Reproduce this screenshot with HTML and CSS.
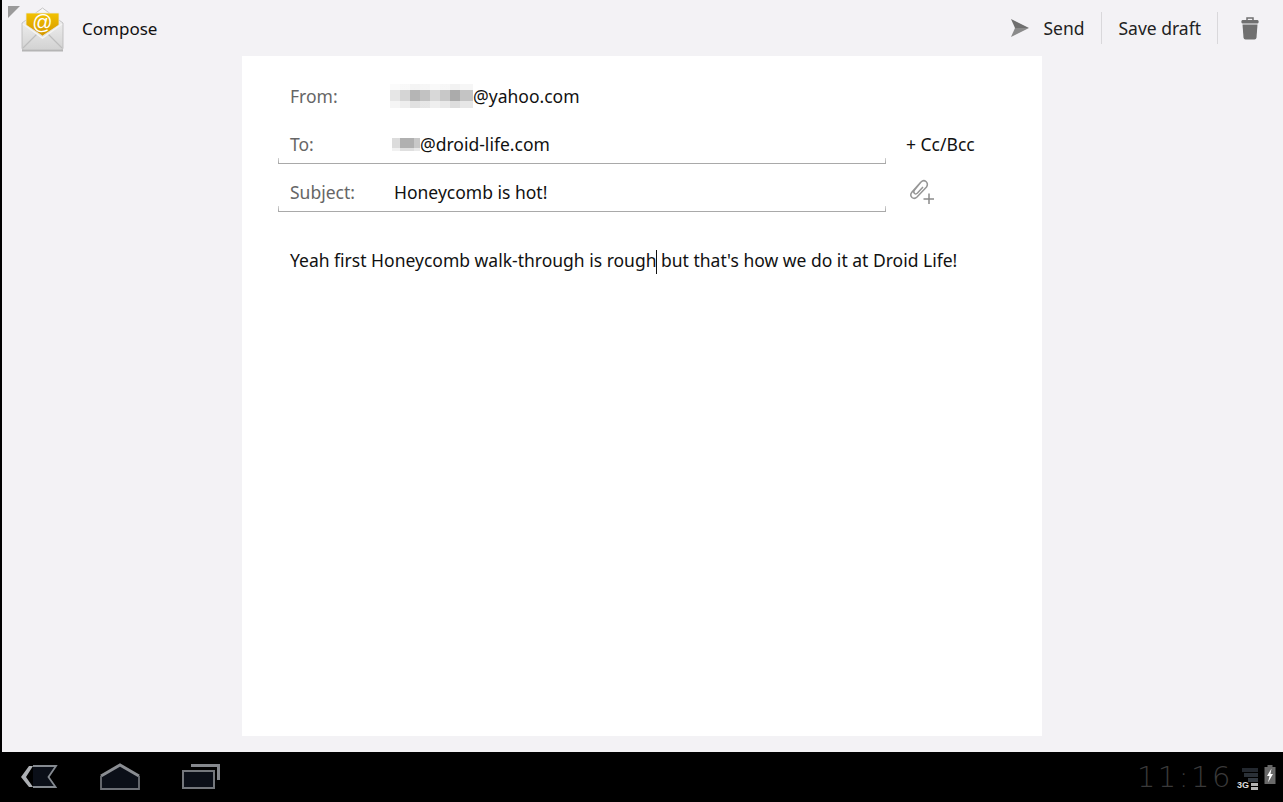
FILE: index.html
```html
<!DOCTYPE html>
<html lang="en">
<head>
    <meta charset="UTF-8">
    <meta name="viewport" content="width=device-width, initial-scale=1.0">
    <title>Compose</title>
    <link rel="stylesheet" href="styles.css">
</head>
<body>
    <div class="app">
        <header class="action-bar">
            <div class="title-group">
                <span class="corner"></span>
                <svg class="mail-icon" width="46" height="46" viewBox="0 0 46 46">
                    <defs>
                        <linearGradient id="flap" x1="0" y1="0" x2="0" y2="1">
                            <stop offset="0" stop-color="#f2c200"/>
                            <stop offset="1" stop-color="#d49600"/>
                        </linearGradient>
                        <linearGradient id="paper" x1="0" y1="0" x2="0" y2="1">
                            <stop offset="0" stop-color="#fafafa"/>
                            <stop offset="1" stop-color="#d2d2d2"/>
                        </linearGradient>
                    </defs>
                    <rect x="3" y="43.500" width="41" height="2" fill="#b4b4b4"/>
                    <path d="M3 17 L23.500 2 L44 17 V42 Q44 44 42 44 H5 Q3 44 3 42 Z" fill="url(#paper)" stroke="#b8b8b8" stroke-width="0.800"/>
                    <path d="M7 7 H40 V19 L23.500 30 L7 19 Z" fill="url(#flap)" stroke="#e8e8e8" stroke-width="0.800"/>
                    <path d="M4 42 L18 28 M43 42 L29 28" stroke="#bdbdbd" stroke-width="1.200" fill="none"/>
                    <path d="M4 18 L23.500 32 L43 18" stroke="#f4f4f4" stroke-width="1.500" fill="none"/>
                    <text x="23.500" y="23" class="mail-at">@</text>
                </svg>
                <span class="title">Compose</span>
            </div>
            <div class="actions">
                <button class="action send-action">
                    <svg width="20" height="20" viewBox="0 0 20 20">
                        <path d="M1 1 L19 10 L5 10 Z" fill="#6f6f6f"/>
                        <path d="M5 10 L19 10 L1 19 Z" fill="#8a8a8a"/>
                    </svg>
                    Send
                </button>
                <span class="divider"></span>
                <button class="action save-action">Save draft</button>
                <span class="divider"></span>
                <button class="action trash-action">
                    <svg width="18" height="23" viewBox="0 0 18 23">
                        <path d="M6 3 V1 H12 V3" fill="none" stroke="#707070" stroke-width="1.500"/>
                        <rect x="0.500" y="3" width="17" height="3.500" rx="1.200" fill="#707070"/>
                        <path d="M1.500 7.500 H16.500 L15.500 20.500 Q15.300 22.500 13.500 22.500 H4.500 Q2.700 22.500 2.500 20.500 Z" fill="#707070"/>
                    </svg>
                </button>
            </div>
        </header>

        <main class="sheet">
            <div class="row">
                <span class="label">From:</span>
                <span class="value value-from"><span class="blur blur-from"></span>@yahoo.com</span>
            </div>
            <div class="row">
                <div class="field">
                    <span class="label">To:</span>
                    <span class="value value-to"><span class="blur blur-to"></span>@droid-life.com</span>
                </div>
                <span class="cc-bcc">+ Cc/Bcc</span>
            </div>
            <div class="row">
                <div class="field">
                    <span class="label">Subject:</span>
                    <span class="value">Honeycomb is hot!</span>
                </div>
                <svg class="attach-icon" width="28" height="28" viewBox="0 0 28 28">
                    <path d="M12.500 5.500 L4 15 Q1.500 18 4 20.500 Q6.500 22.500 9 20 L18.500 10 Q20.500 7 18 4.500 Q15.500 2.500 13 5 L6.500 13 Q5 15 6.500 16.500 Q8 17.500 9.500 16 L15 10" fill="none" stroke="#969696" stroke-width="1.500"/>
                    <path d="M21 16.500 V27 M15.500 22 H26" stroke="#8a8a8a" stroke-width="1.500"/>
                </svg>
            </div>
            <p class="message">Yeah first Honeycomb walk-through is rough<span class="caret"></span> but that's how we do it at Droid Life!</p>
        </main>
    </div>

    <footer class="system-bar">
        <div class="nav-buttons">
            <svg width="40" height="28" viewBox="0 0 40 28">
                <path d="M14 4 H38 L30 14 L38 24 H14 Z" fill="#0b0f18"/>
                <path d="M14 3 H37 L29.500 14 L36.500 24 H14" fill="none" stroke="#858a90" stroke-width="1.800"/>
                <path d="M10 3 H14 L7 14 L14 24 H10 L2 14 Z" fill="#adb0b4"/>
            </svg>
            <svg width="42" height="28" viewBox="0 0 42 28">
                <path d="M2 13 L21 2 L40 13 V26 H2 Z" fill="#0b0f18"/>
                <path d="M2 13 L21 2 L40 13" fill="none" stroke="#8a8d92" stroke-width="3"/>
                <path d="M2 13 V26 H40 V13" fill="none" stroke="#6d7076" stroke-width="1.800"/>
            </svg>
            <svg width="40" height="28" viewBox="0 0 40 28">
                <path d="M10 2.500 H37.500 V17" fill="none" stroke="#85888d" stroke-width="3"/>
                <rect x="2" y="8" width="31" height="17" fill="#0b0f18" stroke="#74777c" stroke-width="2"/>
            </svg>
        </div>
        <div class="status">
            <span class="clock">11:16</span>
            <div class="signal">
                <svg width="16" height="22" viewBox="0 0 16 22">
                    <rect x="0" y="0" width="16" height="4" fill="#23282f"/>
                    <rect x="2" y="5" width="14" height="4" fill="#2a3037"/>
                    <rect x="6" y="10" width="10" height="4" fill="#333a42"/>
                    <rect x="9" y="15" width="7" height="3" fill="#b4b4b4"/>
                    <rect x="9" y="19" width="7" height="3" fill="#b4b4b4"/>
                </svg>
                <span class="network">3G</span>
            </div>
            <svg class="battery" width="12" height="20" viewBox="0 0 12 20">
                <rect x="3.500" y="0" width="5" height="2" fill="#666"/>
                <rect x="0.500" y="2" width="11" height="17" fill="#6a6a6a"/>
                <path d="M7.500 3.500 L3 11 H5.500 L4 17.500 L9 9 H6.500 Z" fill="#fff"/>
            </svg>
        </div>
    </footer>
</body>
</html>
```

FILE: styles.css
```css
* {
    box-sizing: border-box;
}
body {
    margin: 0;
    height: 802px;
    overflow: hidden;
    display: flex;
    flex-direction: column;
    background: #000;
    font-family: "Noto Sans", "Open Sans", sans-serif;
    font-size: 17.5px;
    color: #111;
}
.app {
    height: 752px;
    margin-left: 2px;
    background: #f3f2f5;
    display: flex;
    flex-direction: column;
}
.action-bar {
    height: 56px;
    display: flex;
    justify-content: space-between;
    align-items: center;
}
.title-group {
    position: relative;
    display: flex;
    align-items: center;
    padding-left: 17px;
}
.corner {
    position: absolute;
    left: 6px;
    top: 2px;
    width: 0;
    height: 0;
    border-top: 12px solid #9a9a9a;
    border-right: 12px solid transparent;
}
.mail-icon {
    margin-top: 2px;
}
.mail-at {
    font-family: "Liberation Sans", sans-serif;
    font-size: 20px;
    fill: #fff;
    text-anchor: middle;
}
.title {
    margin-left: 17px;
    font-size: 17px;
}
.actions {
    display: flex;
    align-items: center;
    padding-right: 24px;
}
.action {
    border: none;
    background: none;
    padding: 0;
    font: inherit;
    color: #222;
    display: flex;
    align-items: center;
}
.send-action svg {
    margin-right: 13px;
}
.send-action {
    margin-right: 17px;
}
.save-action {
    margin: 0 16px;
}
.trash-action {
    margin-left: 23px;
}
.divider {
    width: 1px;
    height: 32px;
    background: #d9d8db;
}
.sheet {
    width: 800px;
    height: 680px;
    margin-left: 240px;
    padding: 16px 0 0 36px;
    background: #fff;
}
.row {
    height: 48px;
    display: flex;
    line-height: 48px;
}
.row > .label {
    margin-left: 12px;
}
.field {
    width: 608px;
    height: 44px;
    padding-left: 12px;
    display: flex;
    border-bottom: 1px solid #a9a9a9;
    background-image: linear-gradient(#d4d4d4, #a9a9a9), linear-gradient(#d4d4d4, #a9a9a9);
    background-size: 1px 5px;
    background-position: left bottom, right bottom;
    background-repeat: no-repeat;
}
.label {
    width: 100px;
    color: #666;
}
.value {
    display: flex;
    align-items: center;
    height: 48px;
    padding-left: 4px;
}
.value-from {
    padding-left: 0;
}
.value-to {
    padding-left: 2px;
}
.blur {
    display: block;
}
.blur-from {
    width: 83px;
    height: 24px;
    background:
        linear-gradient(rgba(255, 255, 255, 0.85) 0 6px, rgba(255, 255, 255, 0) 6px 17px, rgba(255, 255, 255, 0.6) 17px),
        linear-gradient(90deg, #e6e6e6 0 10px, #d5d5d5 10px 20px, #b5b5b5 20px 30px, #c2c2c2 30px 40px, #d8d8d8 40px 50px, #c8c8c8 50px 60px, #ababab 60px 70px, #c4c4c4 70px);
}
.blur-to {
    width: 28px;
    height: 13px;
    background:
        linear-gradient(rgba(255, 255, 255, 0) 0 10px, rgba(255, 255, 255, 0.6) 10px),
        linear-gradient(90deg, #dcdcdc 0 8px, #b0b0b0 8px 22px, #c8c8c8 22px);
}
.cc-bcc {
    margin-left: 20px;
}
.attach-icon {
    margin: 9px 0 0 22px;
}
.message {
    margin: 32px 0 0 12px;
    line-height: 24px;
    white-space: nowrap;
}
.caret {
    display: inline-block;
    width: 1px;
    height: 24px;
    margin-right: -1px;
    vertical-align: middle;
    background: #111;
}
.system-bar {
    height: 50px;
    display: flex;
    justify-content: space-between;
    align-items: center;
    background: #000;
}
.nav-buttons {
    display: flex;
    align-items: center;
    gap: 40px;
    padding-left: 19px;
}
.status {
    display: flex;
    align-items: center;
    padding-right: 7px;
}
.clock {
    font-family: "DejaVu Sans", sans-serif;
    font-weight: 200;
    font-size: 29px;
    letter-spacing: 2.5px;
    color: #3a3a3a;
}
.signal {
    position: relative;
    width: 16px;
    height: 22px;
    margin: 4px 6px 0 9px;
}
.signal svg {
    display: block;
}
.network {
    position: absolute;
    left: -5px;
    bottom: 0;
    font-family: "Liberation Sans", sans-serif;
    font-size: 9px;
    font-weight: bold;
    line-height: 9px;
    color: #ddd;
}
.battery {
    margin-bottom: 4px;
}
```
